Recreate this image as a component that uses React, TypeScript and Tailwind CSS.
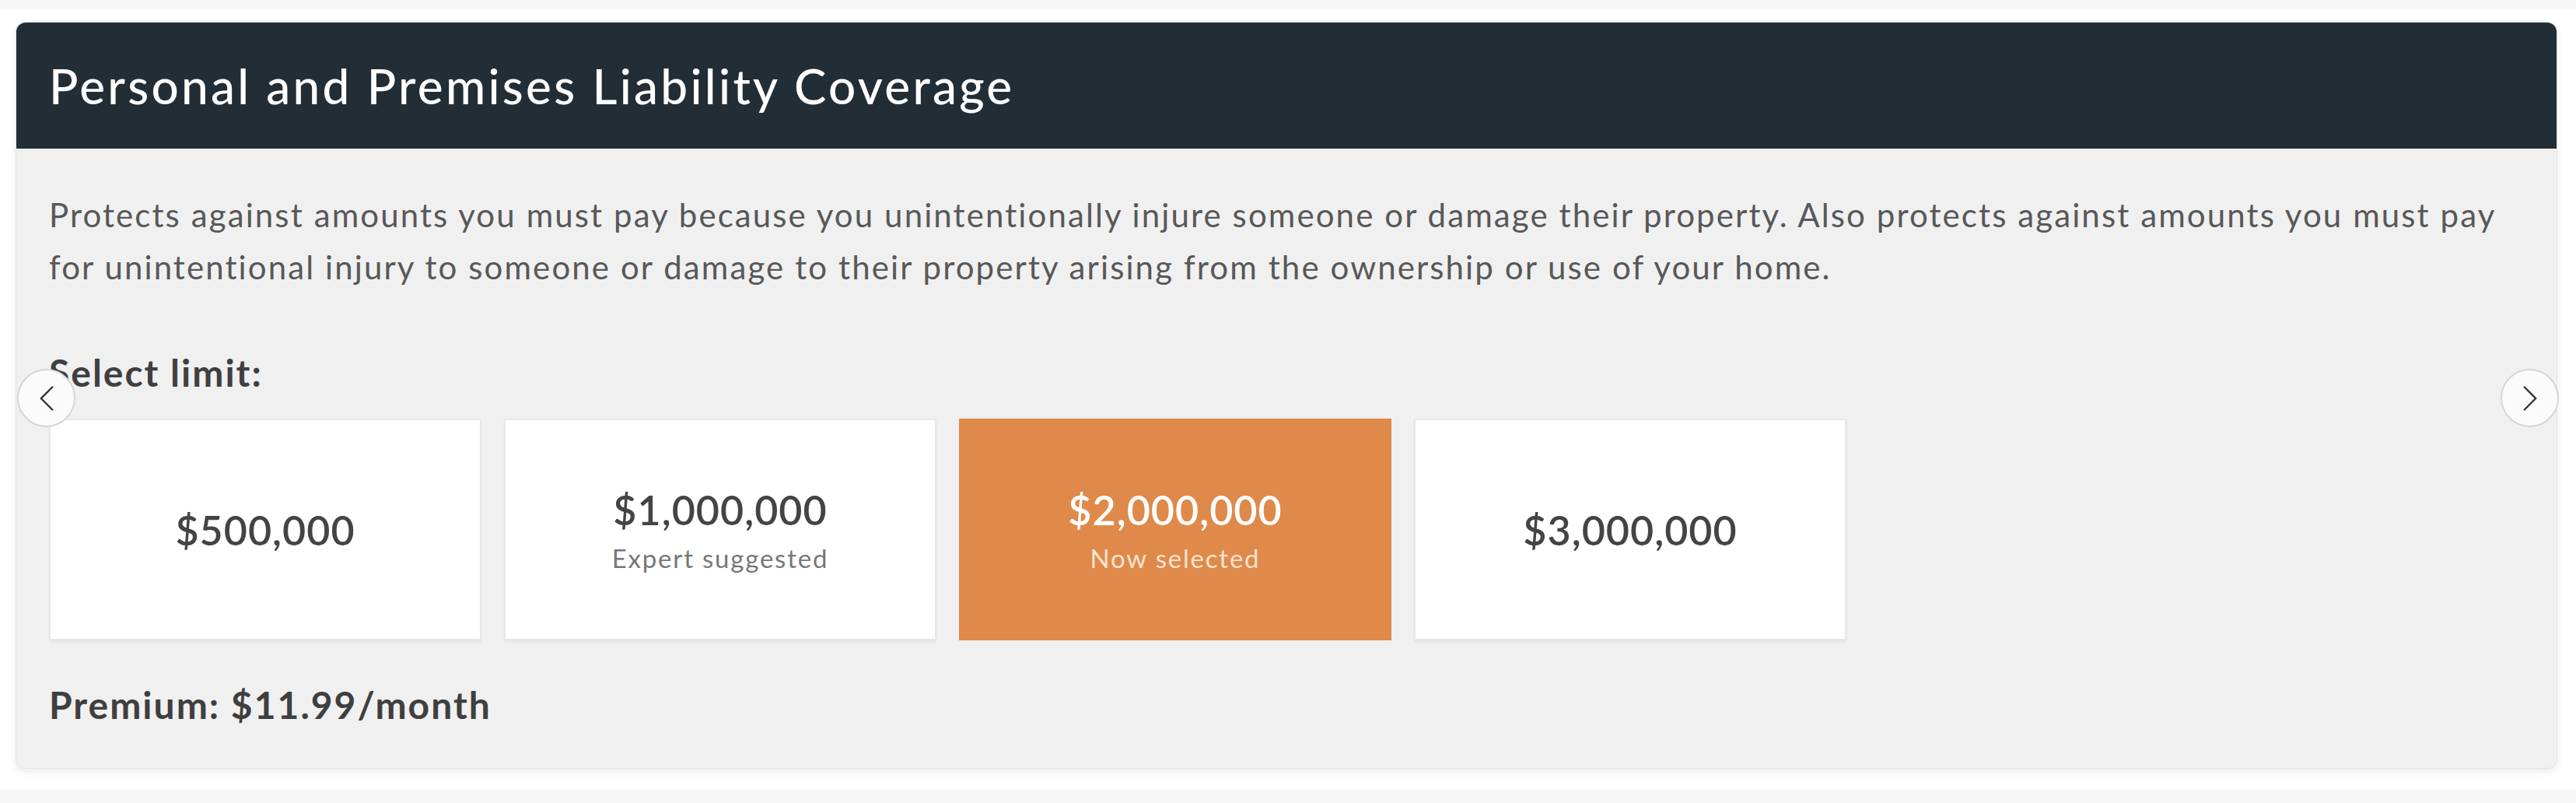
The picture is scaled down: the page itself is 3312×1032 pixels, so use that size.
import { ChevronLeft, ChevronRight } from "lucide-react";

const limits = [
  { amount: "$500,000" },
  { amount: "$1,000,000", note: "Expert suggested" },
  { amount: "$2,000,000", note: "Now selected", selected: true },
  { amount: "$3,000,000" },
];

export default function App() {
  return (
    <div className="w-[3312px] h-[1032px] bg-white font-['Lato',_'Liberation_Sans',_sans-serif] overflow-hidden">
      <div className="h-[12px] bg-[#f7f7f7]" />
      <div className="px-[20px] pt-[16px]">
        {/* Coverage card */}
        <div className="relative w-[3268px] h-[960px] rounded-[12px] bg-[#f0f0f0] border border-[#e2e4e9] shadow-[0_4px_10px_rgba(0,0,0,0.08)]">
          <div className="h-[162px] rounded-t-[12px] bg-[#222d36] flex items-center px-[42px]">
            <h2 className="text-white text-[62px] font-medium tracking-[3.3px]">
              Personal and Premises Liability Coverage
            </h2>
          </div>

          <div className="px-[42px] pt-[52px]">
            <p className="text-[#585858] text-[42px] leading-[67px] tracking-[2.1px]">
              Protects against amounts you must pay because you unintentionally injure someone or damage their property.
              Also protects against amounts you must pay
              <br />
              for unintentional injury to someone or damage to their property arising from the ownership or use of your
              home.
            </p>

            <div className="mt-[76px] text-[#3f3f3f] text-[48px] leading-[52px] font-bold tracking-[2px]">
              Select limit:
            </div>

            {/* Limit options */}
            <div className="mt-[33px] flex gap-[29px]">
              {limits.map((l) => (
                <button
                  key={l.amount}
                  className={`w-[556px] h-[285px] flex flex-col items-center justify-center ${
                    l.selected
                      ? "bg-[#df8a4a] border-2 border-[#df8a4a]"
                      : "bg-white border-2 border-[#e5e7eb] shadow-[0_2px_3px_rgba(0,0,0,0.05)]"
                  }`}
                >
                  <span
                    className={`text-[52px] leading-[58px] font-semibold tracking-[1px] ${
                      l.selected ? "text-white" : "text-[#444444]"
                    }`}
                  >
                    {l.amount}
                  </span>
                  {l.note && (
                    <span
                      className={`mt-[14px] text-[33px] leading-[38px] tracking-[1.8px] ${
                        l.selected ? "text-[#fbe3d0]" : "text-[#777777]"
                      }`}
                    >
                      {l.note}
                    </span>
                  )}
                </button>
              ))}
            </div>

            <div className="mt-[57px] text-[#3f3f3f] text-[48px] leading-[52px] font-bold tracking-[2px]">
              Premium: $11.99/month
            </div>
          </div>

          {/* Carousel arrows */}
          <button className="absolute left-[1px] top-[445px] w-[75px] h-[75px] rounded-full bg-[#fbfbfb] border-2 border-[#d6d6d6] flex items-center justify-center">
            <ChevronLeft className="w-[58px] h-[58px] text-[#333333]" strokeWidth={1} />
          </button>
          <button className="absolute right-[-3px] top-[445px] w-[75px] h-[75px] rounded-full bg-[#fbfbfb] border-2 border-[#d6d6d6] flex items-center justify-center">
            <ChevronRight className="w-[58px] h-[58px] text-[#333333]" strokeWidth={1} />
          </button>
        </div>
      </div>
      <div className="mt-[27px] h-[20px] bg-[#f7f7f7]" />
    </div>
  );
}
